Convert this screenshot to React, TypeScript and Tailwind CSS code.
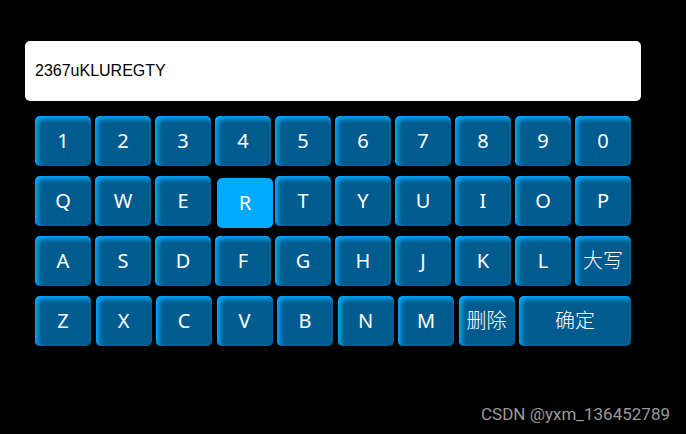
import { useState } from "react";
import { clsx } from "clsx";

const rows: string[][] = [
  ["1", "2", "3", "4", "5", "6", "7", "8", "9", "0"],
  ["Q", "W", "E", "R", "T", "Y", "U", "I", "O", "P"],
  ["A", "S", "D", "F", "G", "H", "J", "K", "L", "大写"],
  ["Z", "X", "C", "V", "B", "N", "M", "删除", "确定"],
];

type KeyProps = {
  label: string;
  active: boolean;
  onPress: (label: string) => void;
};

function Key({ label, active, onPress }: KeyProps) {
  return (
    <button
      type="button"
      onClick={() => onPress(label)}
      className={clsx(
        "h-[50px] min-w-0 rounded-[5px] text-xl text-white",
        label === "确定" ? "w-28" : "w-14",
        label.length > 1 && "font-light",
        // A pressed key shifts down and to the right and lights up.
        active
          ? "translate-x-0.5 translate-y-0.5 bg-[#00aaff]"
          : "bg-[#005c8e] shadow-[inset_3px_3px_5px_#00aaff]",
      )}
    >
      {label}
    </button>
  );
}

export default function App() {
  const [value, setValue] = useState("2367uKLUREGTY");
  const [pressed, setPressed] = useState("R");

  const press = (label: string) => {
    setPressed(label);
    if (label === "删除") setValue(value.slice(0, -1));
    else if (label.length === 1) setValue(value + label);
  };

  return (
    <div className="flex min-h-screen flex-col justify-between bg-black pt-[41px] pr-4 pb-2 pl-[25px] font-['Noto_Sans','Noto_Sans_CJK_SC',sans-serif]">
      <main className="flex w-full max-w-[616px] flex-col gap-[15px]">
        <input
          type="text"
          aria-label="输入"
          value={value}
          onChange={(e) => setValue(e.target.value)}
          className="h-[60px] w-full rounded-[5px] bg-white px-2.5 font-['Liberation_Sans',sans-serif] text-base text-black outline-none"
        />
        <div className="flex flex-col gap-2.5 px-2.5 font-normal">
          {rows.map((row) => (
            <div key={row[0]} className="flex justify-between">
              {row.map((label) => (
                <Key
                  key={label}
                  label={label}
                  active={label === pressed}
                  onPress={press}
                />
              ))}
            </div>
          ))}
        </div>
      </main>
      <footer className="self-end font-['Roboto',sans-serif] text-[17px] leading-6 text-[#9a9a9a]">
        CSDN @yxm_136452789
      </footer>
    </div>
  );
}
